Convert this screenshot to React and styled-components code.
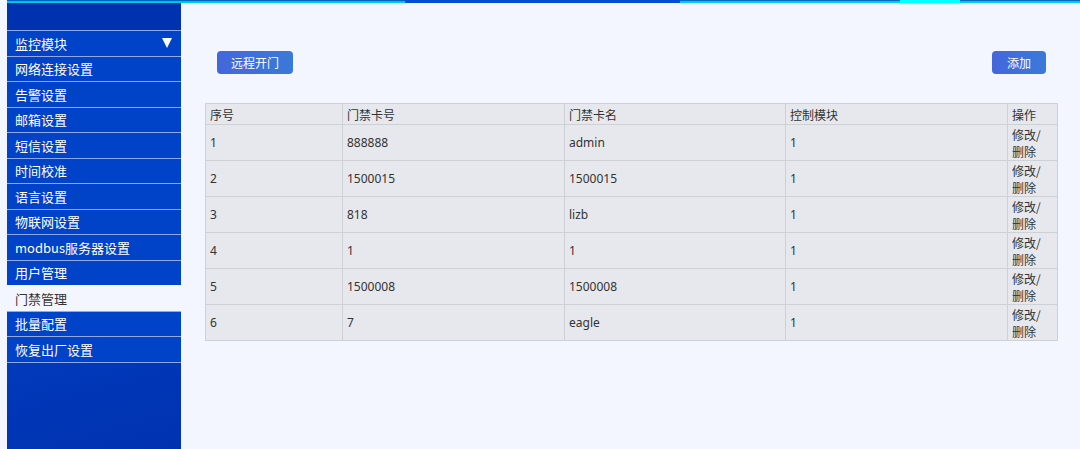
import React from 'react';
import styled, { createGlobalStyle } from 'styled-components';

const GlobalStyle = createGlobalStyle`
  html, body {
    margin: 0;
    padding: 0;
    background: #f3f6fe;
  }
  body {
    font-family: "Noto Sans", "Noto Sans CJK SC", sans-serif;
  }
`;

const Page = styled.div`
  margin-left: 7px;
  min-height: 100vh;
  display: flex;
  flex-direction: column;
`;

const TopStrip = styled.div`
  display: flex;
  height: 3px;
`;

const StripPart = styled.div`
  width: ${p => p.w}px;
  flex: ${p => (p.grow ? 1 : 'none')};
  background: ${p => p.bg};
`;

const Body = styled.div`
  flex: 1;
  display: flex;
`;

const Sidebar = styled.nav`
  width: 174px;
  flex: none;
  display: flex;
  flex-direction: column;
  background: linear-gradient(165deg, #0036b6 0%, #0040c4 50%, #0032b0 100%);
`;

const SideTop = styled.div`
  height: 27px;
  background: #0032b0;
`;

const NavItem = styled.div`
  height: 24.5px;
  border-top: 1px solid ${p => (p.active ? '#f3f6fe' : '#8fa9e6')};
  border-bottom: ${p => (p.last ? '1px solid #8fa9e6' : 'none')};
  display: flex;
  align-items: center;
  justify-content: space-between;
  padding: 0 9px 0 8px;
  font-family: "Noto Sans CJK SC", sans-serif;
  font-size: 13px;
  color: ${p => (p.active ? '#333' : '#fff')};
  background: ${p => (p.active ? '#f3f6fe' : '#0042c8')};
`;

const Caret = styled.span`
  width: 0;
  height: 0;
  border-left: 5.5px solid transparent;
  border-right: 5.5px solid transparent;
  border-top: 10px solid #fff;
`;

const Main = styled.main`
  flex: 1;
  padding: 48px 23px 0 24px;
  background: #f3f6fe;
`;

const Toolbar = styled.div`
  display: flex;
  justify-content: space-between;
  padding: 0 12px;
`;

const Button = styled.button`
  height: 23px;
  width: ${p => p.w}px;
  border: none;
  border-radius: 4px;
  background: linear-gradient(90deg, #4466dc, #3a7ad8);
  color: #fff;
  font-family: "Noto Sans CJK SC", sans-serif;
  font-size: 12px;
  padding: 0;
  cursor: pointer;
`;

const Table = styled.table`
  margin-top: 29px;
  width: 852px;
  border-collapse: collapse;
  table-layout: fixed;
  background: #e6e8ed;
  font-family: "Noto Sans", "Noto Sans CJK SC", sans-serif;
  font-size: 12px;
  color: #333;
`;

const Th = styled.th`
  height: 20px;
  border: 1px solid #cdd0d5;
  text-align: left;
  font-weight: normal;
  padding: 0 4px;
  font-family: "Noto Sans CJK SC", sans-serif;
`;

const Td = styled.td`
  height: 35px;
  border: 1px solid #cdd0d5;
  padding: 0 4px;
  line-height: 17px;
  vertical-align: middle;
  font-family: ${p => (p.cjk ? '"Noto Sans CJK SC", sans-serif' : 'inherit')};
`;

const menu = [
  '网络连接设置', '告警设置', '邮箱设置', '短信设置', '时间校准', '语言设置',
  '物联网设置', 'modbus服务器设置', '用户管理', '门禁管理', '批量配置', '恢复出厂设置',
];

const rows = [
  ['1', '888888', 'admin', '1'],
  ['2', '1500015', '1500015', '1'],
  ['3', '818', 'lizb', '1'],
  ['4', '1', '1', '1'],
  ['5', '1500008', '1500008', '1'],
  ['6', '7', 'eagle', '1'],
];

const App = () => {
  return (
    <Page>
      <GlobalStyle />
      <TopStrip>
        <StripPart w={398} bg="linear-gradient(#0038b0 0%, #00d8f0 60%, #00c0e8 100%)" />
        <StripPart w={275} bg="#0050d0" />
        <StripPart w={220} bg="linear-gradient(#0040b0 0%, #00e0f8 60%, #00c8f0 100%)" />
        <StripPart w={60} bg="#00ffff" />
        <StripPart grow bg="linear-gradient(#0040b0 0%, #00e0f8 60%, #00c8f0 100%)" />
      </TopStrip>
      <Body>
        <Sidebar>
          <SideTop />
          <NavItem>
            监控模块
            <Caret />
          </NavItem>
          {menu.map((m, i) => (
            <NavItem key={m} active={m === '门禁管理'} last={i === menu.length - 1}>
              {m}
            </NavItem>
          ))}
        </Sidebar>
        <Main>
          <Toolbar>
            <Button w={76}>远程开门</Button>
            <Button w={54}>添加</Button>
          </Toolbar>
          <Table>
            <colgroup>
              <col style={{ width: 137 }} />
              <col style={{ width: 222 }} />
              <col style={{ width: 221 }} />
              <col style={{ width: 222 }} />
              <col style={{ width: 50 }} />
            </colgroup>
            <thead>
              <tr>
                <Th>序号</Th>
                <Th>门禁卡号</Th>
                <Th>门禁卡名</Th>
                <Th>控制模块</Th>
                <Th>操作</Th>
              </tr>
            </thead>
            <tbody>
              {rows.map(r => (
                <tr key={r[0]}>
                  <Td>{r[0]}</Td>
                  <Td>{r[1]}</Td>
                  <Td>{r[2]}</Td>
                  <Td>{r[3]}</Td>
                  <Td cjk>
                    修改/
                    <br />
                    删除
                  </Td>
                </tr>
              ))}
            </tbody>
          </Table>
        </Main>
      </Body>
    </Page>
  );
};

export default App;
